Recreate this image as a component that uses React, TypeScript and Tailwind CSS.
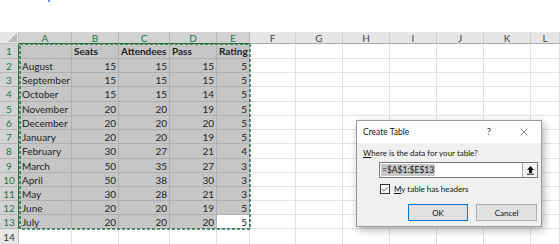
import { Check, X } from "lucide-react";

type Row = { label: string; seats: string; att: string; pass: string; rating: string; bold?: boolean };

const rows: Row[] = [
  { label: "", seats: "Seats", att: "Attendees", pass: "Pass", rating: "Rating", bold: true },
  { label: "August", seats: "15", att: "15", pass: "15", rating: "5" },
  { label: "September", seats: "15", att: "15", pass: "15", rating: "5" },
  { label: "October", seats: "15", att: "15", pass: "14", rating: "5" },
  { label: "November", seats: "20", att: "20", pass: "19", rating: "5" },
  { label: "December", seats: "20", att: "20", pass: "20", rating: "5" },
  { label: "January", seats: "20", att: "20", pass: "19", rating: "5" },
  { label: "February", seats: "30", att: "27", pass: "21", rating: "4" },
  { label: "March", seats: "50", att: "35", pass: "27", rating: "3" },
  { label: "April", seats: "50", att: "38", pass: "30", rating: "3" },
  { label: "May", seats: "30", att: "28", pass: "21", rating: "3" },
  { label: "June", seats: "20", att: "20", pass: "19", rating: "5" },
  { label: "July", seats: "20", att: "20", pass: "20", rating: "5" },
];

// row heights at ~75% zoom alternate between 14 and 15
const heights = ["h-[15px]", "h-[14px]", "h-[14px]", "h-[15px]", "h-[14px]", "h-[14px]", "h-[14px]", "h-[15px]", "h-[14px]", "h-[14px]", "h-[14px]", "h-[14px]", "h-[14px]"];

const emptyCols = ["w-[46px]", "w-[47px]", "w-[47px]", "w-[47px]", "w-[47px]", "w-[47px]", "flex-1"];

function EmptyCells() {
  return (
    <>
      {emptyCols.map((w, i) => (
        <div key={i} className={`${w} shrink-0 border-r border-b border-[#e1e1e1]`} />
      ))}
    </>
  );
}

function ColumnHeader() {
  const sel = [
    ["A", "w-[53px]"],
    ["B", "w-[47px]"],
    ["C", "w-[51px]"],
    ["D", "w-[47px]"],
    ["E", "w-[33px]"],
  ];
  const rest = [
    ["F", "w-[46px]"],
    ["G", "w-[47px]"],
    ["H", "w-[47px]"],
    ["I", "w-[47px]"],
    ["J", "w-[47px]"],
    ["K", "w-[47px]"],
    ["L", "flex-1"],
  ];
  return (
    <div className="flex h-[12px] text-[10px] leading-[10px]">
      <div className="relative w-[19px] shrink-0 bg-[#e6e6e6] border-r border-b border-[#c0c0c0]">
        <div className="absolute right-[1px] bottom-[1px] w-0 h-0 border-l-[9px] border-l-transparent border-b-[9px] border-b-[#b9b9b9]" />
      </div>
      {sel.map(([l, w]) => (
        <div
          key={l}
          className={`${w} shrink-0 flex items-center justify-center bg-[#d2d2d2] text-[#217346] border-r border-[#b5b5b5] border-b border-b-[#217346]`}
        >
          {l}
        </div>
      ))}
      {rest.map(([l, w]) => (
        <div
          key={l}
          className={`${w} shrink-0 flex items-center justify-center bg-[#e6e6e6] text-[#444] border-r border-[#d0d0d0] border-b border-b-[#ababab]`}
        >
          {l}
        </div>
      ))}
    </div>
  );
}

function Dialog() {
  return (
    <div className="absolute left-[356px] top-[120px] w-[186px] h-[107px] bg-[#f0f0f0] border border-[#9a9a9a] shadow-[2px_3px_8px_rgba(0,0,0,0.3)] font-['Lato',sans-serif] text-[8px] text-[#111]">
      <div className="flex items-center h-[22px] bg-white pl-[6px]">
        <span className="flex-1 text-[8.5px]">Create Table</span>
        <span className="w-[12px] text-center text-[9.5px] text-[#333] mr-[23px]">?</span>
        <X className="w-[12px] h-[12px] mr-[11px] text-[#333]" strokeWidth={1.2} />
      </div>
      <div className="pl-[6px] pt-[4px] leading-[12px]">
        <span className="underline">W</span>here is the data for your table?
      </div>
      <div className="ml-[22px] mt-[3px] w-[159px] h-[16px] flex bg-white border border-[#7a7a7a]">
        <div className="flex-1 flex items-center pl-[1px]">
          <span className="bg-[#c8c8c8] px-[1px] leading-[12px] text-[8.5px]">=$A$1:$E$13</span>
        </div>
        <div className="w-[15px] flex items-center justify-center border-l border-[#adadad] bg-[#f4f4f4]">
          <svg width="9" height="10" viewBox="0 0 9 10">
            <path d="M4.5 1 L8 5 H6 V8 H3 V5 H1 Z" fill="#111" />
            <path d="M1 9.2 H8" stroke="#111" strokeWidth="1" />
          </svg>
        </div>
      </div>
      <div className="flex items-center ml-[23px] mt-[6px] h-[10px]">
        <div className="w-[10px] h-[10px] bg-white border border-[#333] flex items-center justify-center">
          <Check className="w-[9px] h-[9px] text-[#111]" strokeWidth={2} />
        </div>
        <span className="ml-[4px]">
          <span className="underline">M</span>y table has headers
        </span>
      </div>
      <div className="flex mt-[10px] ml-[51px] gap-[8px]">
        <div className="w-[60px] h-[17px] flex items-center justify-center bg-[#e1e1e1] border border-[#0078d7]">OK</div>
        <div className="w-[61px] h-[17px] flex items-center justify-center bg-[#e1e1e1] border border-[#adadad]">Cancel</div>
      </div>
    </div>
  );
}

export default function App() {
  return (
    <div className="relative w-[560px] h-[244px] bg-white overflow-hidden font-['Lato',sans-serif] text-[10px] text-[#222]">
      {/* stray cursor pixel */}
      <div className="h-[32px] relative">
        <div className="absolute left-[48px] top-0 w-[2px] h-[2px] bg-[#6b8ef5]" />
      </div>
      <ColumnHeader />
      {rows.map((r, i) => (
        <div key={i} className={`flex ${heights[i]} leading-none`}>
          <div className="w-[19px] shrink-0 flex items-center justify-center bg-[#d2d2d2] text-[#217346] border-r border-r-[#217346] border-b border-[#b5b5b5]">
            {i + 1}
          </div>
          <div className={`w-[53px] shrink-0 flex items-center pl-[3px] bg-[#c6c6c6] border-r border-b border-[#b0b0b0] ${r.bold ? "font-bold" : ""}`}>
            {r.label}
          </div>
          {[
            [r.seats, "w-[47px]"],
            [r.att, "w-[51px]"],
            [r.pass, "w-[47px]"],
          ].map(([v, w], j) => (
            <div
              key={j}
              className={`${w} shrink-0 flex items-center ${r.bold ? "justify-start pl-[2px] font-bold" : "justify-end pr-[2px]"} bg-[#c6c6c6] border-r border-b border-[#b0b0b0]`}
            >
              {v}
            </div>
          ))}
          <div
            className={`w-[33px] shrink-0 flex items-center ${r.bold ? "justify-start pl-[2px] font-bold" : "justify-end pr-[2px]"} ${i === 12 ? "bg-white" : "bg-[#c6c6c6]"} border-r border-b border-[#b0b0b0]`}
          >
            {r.rating}
          </div>
          <EmptyCells />
        </div>
      ))}
      <div className="flex h-[16px] leading-none">
        <div className="w-[19px] shrink-0 flex items-center justify-center bg-[#e6e6e6] text-[#333] border-r border-b border-[#c0c0c0]">
          14
        </div>
        {["w-[53px]", "w-[47px]", "w-[51px]", "w-[47px]", "w-[33px]"].map((w, i) => (
          <div key={i} className={`${w} shrink-0 border-r border-b border-[#e1e1e1]`} />
        ))}
        <EmptyCells />
      </div>

      {/* copy marquee around A1:E13 */}
      <svg className="absolute left-[19px] top-[43px]" width="232" height="187">
        <rect x="1" y="1" width="230" height="185" fill="none" stroke="#217346" strokeWidth="1.5" strokeDasharray="3 2" />
      </svg>

      <Dialog />
    </div>
  );
}
